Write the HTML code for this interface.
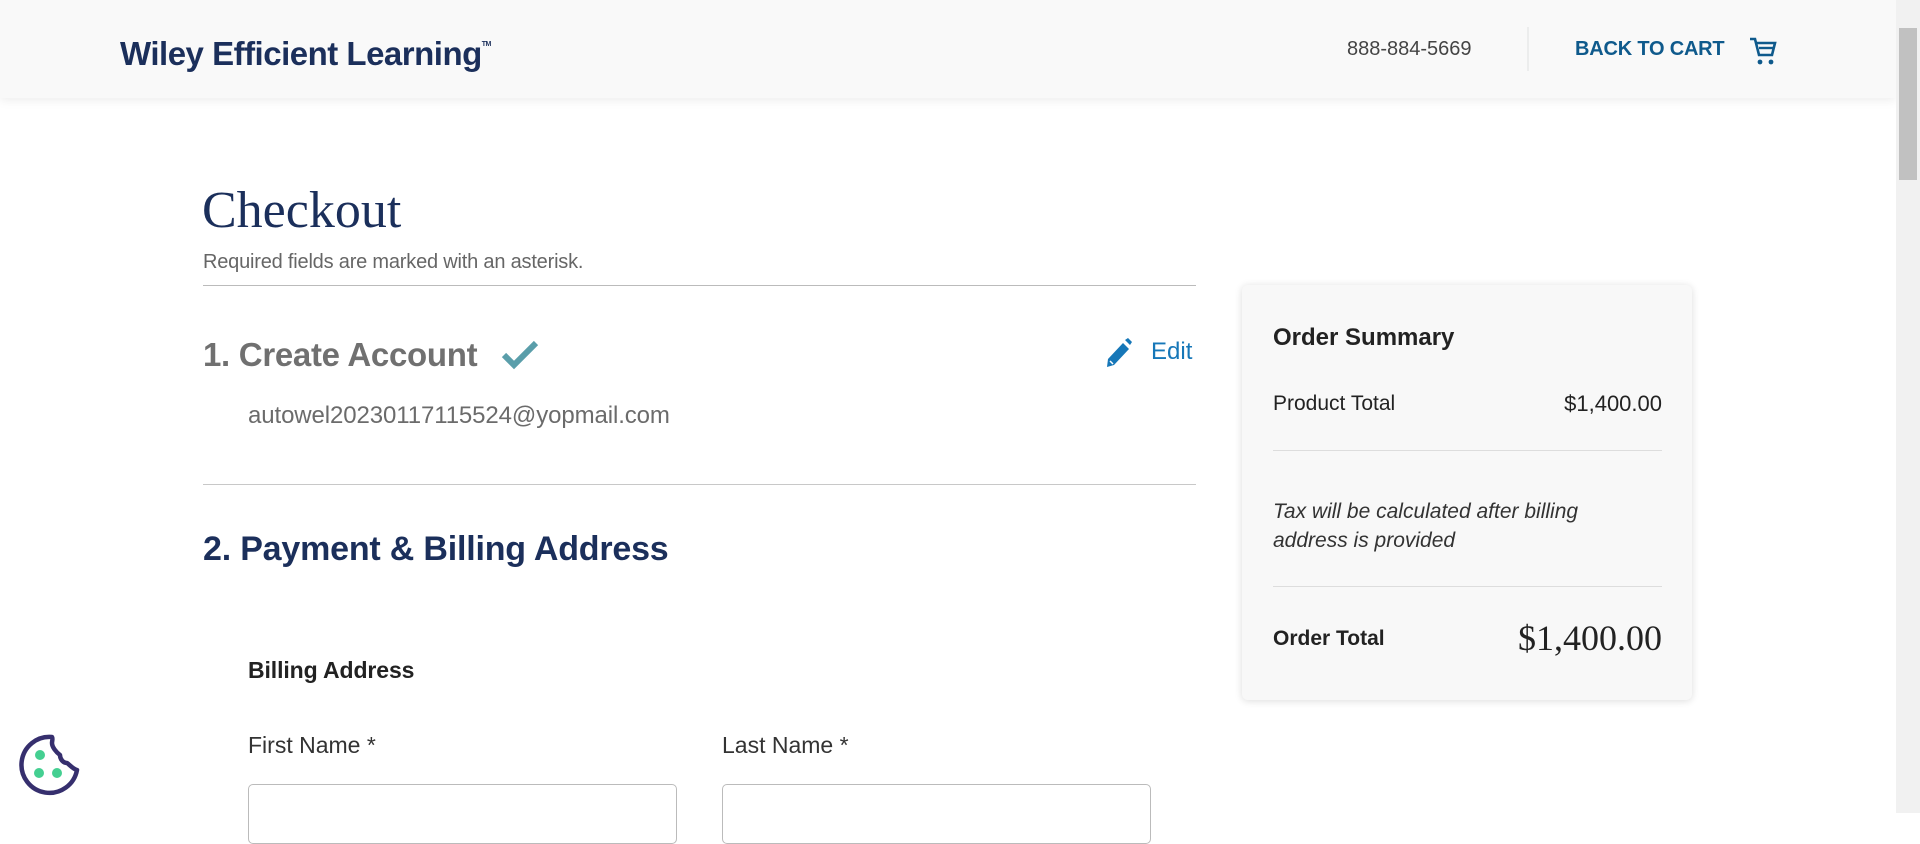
<!DOCTYPE html>
<html><head><meta charset="utf-8">
<style>
*{margin:0;padding:0;box-sizing:border-box}
html,body{width:1920px;height:813px;overflow:hidden;background:#fff;font-family:"Liberation Sans",sans-serif}
.hdr{position:absolute;left:0;top:0;width:1896px;height:98px;background:#f9f9f9;box-shadow:0 2px 10px rgba(0,0,0,.08)}
.logo{position:absolute;left:120px;top:35px;font-size:33px;font-weight:bold;color:#1b2f5b;letter-spacing:-0.5px;white-space:nowrap}
.logo sup{font-size:7px;vertical-align:top;position:relative;top:6px}
.phone{position:absolute;left:1347px;top:38px;font-size:20px;color:#444}
.vdiv{position:absolute;left:1527px;top:27px;width:2px;height:44px;background:#eceded}
.back{position:absolute;left:1575px;top:38px;font-size:20px;font-weight:bold;color:#0f5a8c;letter-spacing:-0.2px}
.cart{position:absolute;left:1748px;top:36px}
.sb{position:absolute;left:1896px;top:0;width:24px;height:813px;background:#f1f1f1}
.sb .th{position:absolute;left:3px;top:28px;width:18px;height:152px;background:#c1c1c1}
.t{position:absolute;white-space:nowrap}
.hr{position:absolute;height:1px;background:#c8c8c8}
.card{position:absolute;left:1242px;top:285px;width:450px;height:415px;background:#f8f8f8;border-radius:6px;box-shadow:0 1px 8px rgba(0,0,0,.14)}
.inp{position:absolute;top:784px;width:429px;height:60px;border:1px solid #bbb;border-radius:5px;background:#fff}
</style></head><body>
<div class="hdr">
 <div class="logo">Wiley Efficient Learning<sup>TM</sup></div>
 <div class="phone">888-884-5669</div>
 <div class="vdiv"></div>
 <div class="back">BACK TO CART</div>
 <svg class="cart" width="30" height="30" viewBox="0 0 30 30"><path d="M2 3h5l4 16h13l3-12H9" fill="none" stroke="#0f5a8c" stroke-width="2.6"/><path d="M11 12h14" stroke="#0f5a8c" stroke-width="2.4"/><circle cx="12" cy="26" r="2.4" fill="#0f5a8c"/><circle cx="23" cy="26" r="2.4" fill="#0f5a8c"/></svg>
</div>
<div class="sb"><div class="th"></div></div>

<div class="t" style="left:202px;top:181px;font-family:'Liberation Serif',serif;font-size:52px;color:#1b2f5b">Checkout</div>
<div class="t" style="left:203px;top:251px;font-size:20px;color:#666;letter-spacing:-0.2px">Required fields are marked with an asterisk.</div>
<div class="hr" style="left:203px;top:285px;width:993px;background:#bbb"></div>

<div class="t" style="left:203px;top:336px;font-size:33px;font-weight:bold;color:#707070;letter-spacing:-0.3px">1. Create Account</div>
<svg class="t" style="left:501px;top:340px" width="38" height="30" viewBox="0 0 38 30"><path d="M3 15l10 10L35 3" fill="none" stroke="#5a9eaa" stroke-width="6"/></svg>
<svg class="t" style="left:1103px;top:336px" width="30" height="34" viewBox="0 0 30 34"><path d="M4 31l1-8L20 7l6 6-15 16z" fill="#1677b8"/><path d="M22 4l3-2 4 4-2 3z" fill="#1677b8"/><path d="M7 25l3 3" stroke="#fff" stroke-width="1.5"/></svg>
<div class="t" style="left:1151px;top:338px;font-size:24px;color:#1677b8">Edit</div>
<div class="t" style="left:248px;top:402px;font-size:24px;color:#6b6b6b;letter-spacing:-0.1px">autowel20230117115524@yopmail.com</div>
<div class="hr" style="left:203px;top:484px;width:993px"></div>

<div class="t" style="left:203px;top:530px;font-size:34px;font-weight:bold;color:#1b2f5b;letter-spacing:-0.2px">2. Payment &amp; Billing Address</div>
<div class="t" style="left:248px;top:657px;font-size:23px;font-weight:bold;color:#222;letter-spacing:-0.1px">Billing Address</div>
<div class="t" style="left:248px;top:732px;font-size:23px;color:#333">First Name *</div>
<div class="t" style="left:722px;top:732px;font-size:23px;color:#333">Last Name *</div>
<div class="inp" style="left:248px"></div>
<div class="inp" style="left:722px"></div>

<div class="card"></div>
<div class="t" style="left:1273px;top:324px;font-size:24px;font-weight:bold;color:#222">Order Summary</div>
<div class="t" style="left:1273px;top:392px;font-size:21px;color:#222">Product Total</div>
<div class="t" style="right:258px;top:391px;font-size:22px;color:#222">$1,400.00</div>
<div class="hr" style="left:1273px;top:450px;width:389px;background:#ddd"></div>
<div class="t" style="left:1273px;top:497px;font-size:21px;font-style:italic;color:#333;line-height:29px">Tax will be calculated after billing<br>address is provided</div>
<div class="hr" style="left:1273px;top:586px;width:389px;background:#ddd"></div>
<div class="t" style="left:1273px;top:627px;font-size:21px;font-weight:bold;color:#222">Order Total</div>
<div class="t" style="right:258px;top:617px;font-family:'Liberation Serif',serif;font-size:36px;color:#222">$1,400.00</div>

<svg class="t" style="left:17px;top:733px" width="64" height="64" viewBox="0 0 64 64"><path d="M35 4a28 28 0 1 0 25 33c-4-1-7-5-10-7-4 0-7-4-7-8-4-3-8-8-8-12 0-2 1-4 0-6z" fill="none" stroke="#362f6e" stroke-width="4.5" stroke-linejoin="round"/><circle cx="23" cy="22" r="5" fill="#44cf91"/><circle cx="22" cy="40" r="5" fill="#44cf91"/><circle cx="40" cy="40" r="5" fill="#44cf91"/></svg>
</body></html>
